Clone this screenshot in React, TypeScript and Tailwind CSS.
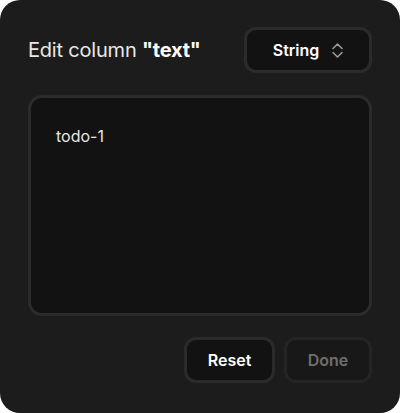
const UpDown: React.FC = () => (
  <svg width="11" height="15" viewBox="0 0 11 15" fill="none" className="text-[#9a9a9a]">
    <path d="M1 5.5 L5.5 1 L10 5.5" stroke="currentColor" strokeWidth="1.6" strokeLinecap="round" strokeLinejoin="round" />
    <path d="M1 9.5 L5.5 14 L10 9.5" stroke="currentColor" strokeWidth="1.6" strokeLinecap="round" strokeLinejoin="round" />
  </svg>
);

const App: React.FC = () => {
  return (
    <div className="w-[400px] h-[413px] bg-white">
      <div className="w-full h-full bg-[#1c1c1c] rounded-[20px] px-7 pt-[27px] pb-[30px] flex flex-col font-['Inter',sans-serif] text-[#e8e8e8]">
        <div className="flex items-center justify-between">
          <h2 className="text-[20px] tracking-[-0.2px]">
            Edit column <span className="font-bold text-white">"text"</span>
          </h2>
          <button className="w-[128px] h-[46px] rounded-[12px] border-[3px] border-[#2b2b2b] bg-[#121212] flex items-center justify-center gap-[13px]">
            <span className="text-[16px] font-semibold text-white">String</span>
            <UpDown />
          </button>
        </div>

        <div className="mt-[22px] h-[221px] rounded-[14px] border-[3px] border-[#2b2b2b] bg-[#121212] px-[25px] pt-[26px]">
          <p className="text-[16px] text-[#e6e6e6]">todo-1</p>
        </div>

        <div className="mt-[21px] flex justify-end gap-[9px]">
          <button className="w-[91px] h-[46px] rounded-[12px] border-[3px] border-[#2b2b2b] bg-[#121212] text-[16px] font-semibold text-white">
            Reset
          </button>
          <button className="w-[88px] h-[46px] rounded-[12px] border-[3px] border-[#252525] bg-[#181818] text-[16px] font-semibold text-[#6f6f6f]">
            Done
          </button>
        </div>
      </div>
    </div>
  );
};

export default App;
